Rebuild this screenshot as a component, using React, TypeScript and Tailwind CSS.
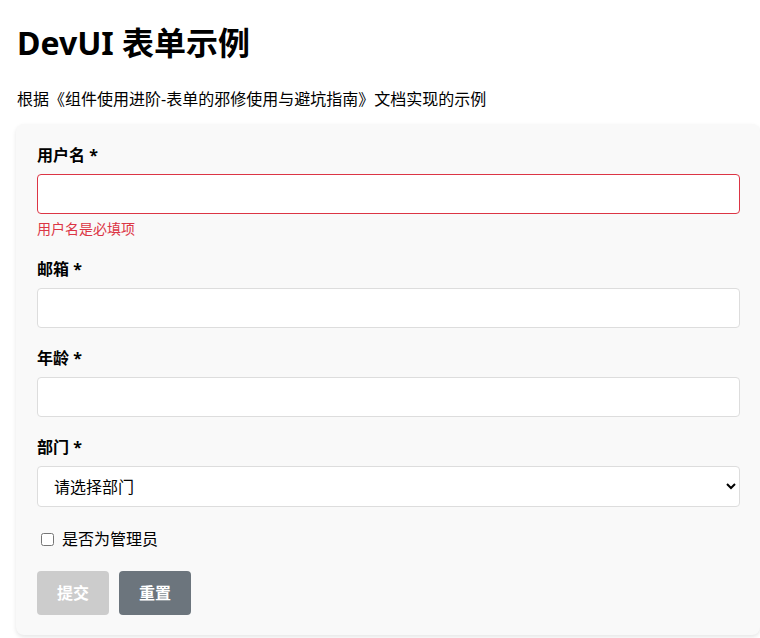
import { useState } from "react";

const font = { fontFamily: '"Noto Sans", "Noto Sans CJK SC", sans-serif' };

function Field({
  label,
  error,
  children,
}: {
  label: string;
  error?: string;
  children: React.ReactNode;
}) {
  return (
    <div className="mb-5">
      <label className="block mb-2 text-[16px] leading-[21px] font-bold text-black">{label} *</label>
      {children}
      {error && <div className="mt-[5px] text-[14px] leading-[20px] text-[#dc3545]">{error}</div>}
    </div>
  );
}

export default function App() {
  const [username, setUsername] = useState("");
  const [email, setEmail] = useState("");
  const [age, setAge] = useState("");
  const [dept, setDept] = useState("");
  const [admin, setAdmin] = useState(false);

  const inputCls =
    "block w-full h-10 rounded border bg-white px-3 text-[16px] outline-none";

  return (
    <div className="min-h-screen bg-white pl-4 pt-5 pb-1 text-black" style={font}>
      <h1 className="ml-[1px] text-[32px] leading-[46px] font-bold">DevUI 表单示例</h1>
      <p className="mt-[21px] ml-[1px] text-[16px] leading-[24px]">
        根据《组件使用进阶-表单的邪修使用与避坑指南》文档实现的示例
      </p>

      {/* form card */}
      <form
        className="mt-[13px] rounded-lg bg-[#f9f9f9] px-5 pt-[21px] pb-5 pl-[21px] shadow-[0_2px_4px_rgba(0,0,0,0.1)]"
        onSubmit={(e) => e.preventDefault()}
      >
        <Field label="用户名" error="用户名是必填项">
          <input
            className={`${inputCls} border-[#dc3545]`}
            value={username}
            onChange={(e) => setUsername(e.target.value)}
          />
        </Field>
        <Field label="邮箱">
          <input
            className={`${inputCls} border-[#dddddd]`}
            value={email}
            onChange={(e) => setEmail(e.target.value)}
          />
        </Field>
        <Field label="年龄">
          <input
            className={`${inputCls} border-[#dddddd]`}
            value={age}
            onChange={(e) => setAge(e.target.value)}
          />
        </Field>
        <Field label="部门">
          <select
            className={`${inputCls} border-[#dddddd] h-[41px]`}
            value={dept}
            onChange={(e) => setDept(e.target.value)}
          >
            <option value="">请选择部门</option>
            <option value="dev">研发部</option>
            <option value="test">测试部</option>
            <option value="ops">运维部</option>
          </select>
        </Field>

        <label className="mb-5 flex h-6 items-center text-[16px]">
          <input
            type="checkbox"
            className="ml-1 mr-2 h-[13px] w-[13px]"
            checked={admin}
            onChange={(e) => setAdmin(e.target.checked)}
          />
          是否为管理员
        </label>

        <div className="flex gap-[10px]">
          <button
            type="submit"
            disabled
            className="h-11 rounded bg-[#cccccc] px-5 text-[16px] font-bold text-white"
          >
            提交
          </button>
          <button
            type="button"
            className="h-11 rounded bg-[#6c757d] px-5 text-[16px] font-bold text-white"
            onClick={() => {
              setUsername("");
              setEmail("");
              setAge("");
              setDept("");
              setAdmin(false);
            }}
          >
            重置
          </button>
        </div>
      </form>
    </div>
  );
}
